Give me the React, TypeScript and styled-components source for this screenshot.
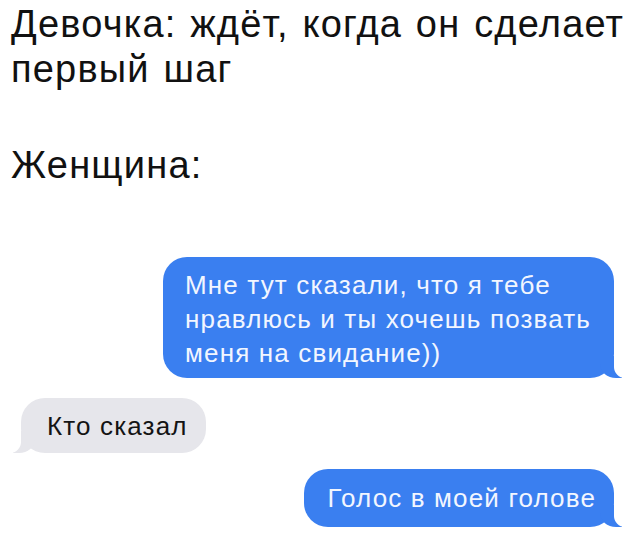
import React from "react";
import styled, { createGlobalStyle } from "styled-components";

const Global = createGlobalStyle`
  html, body { margin: 0; padding: 0; background: #ffffff; }
  body { font-family: "Liberation Sans", Arial, sans-serif; }
`;

const Page = styled.div`
  width: 640px;
  height: 549px;
  overflow: hidden;
  display: flex;
  flex-direction: column;
  background: #ffffff;
`;

const Caption = styled.div`
  padding: 2px 0 0 11px;
  font-size: 38px;
  line-height: 45px;
  color: #111111;
  letter-spacing: 1.2px;
  word-spacing: 2px;
  white-space: nowrap;
`;

const Label = styled(Caption)`
  padding-top: 0;
  margin-top: 51px;
`;

const Chat = styled.div`
  display: flex;
  flex-direction: column;
  padding: 69px 26px 0 21px;
`;

const Row = styled.div<{ $me?: boolean; $top?: number }>`
  display: flex;
  justify-content: ${(p) => (p.$me ? "flex-end" : "flex-start")};
  margin-top: ${(p) => p.$top ?? 0}px;
`;

const Bubble = styled.div<{ $me?: boolean; $pad: string }>`
  position: relative;
  background: ${(p) => (p.$me ? "#3a7ff0" : "#e6e6eb")};
  color: ${(p) => (p.$me ? "#f2f6ff" : "#141414")};
  font-size: 26px;
  line-height: 34px;
  letter-spacing: 1.15px;
  white-space: nowrap;
  border-radius: 24px;
  padding: ${(p) => p.$pad};

  &::before {
    content: "";
    position: absolute;
    bottom: 0;
    height: 22px;
    width: 22px;
    background: ${(p) => (p.$me ? "#3a7ff0" : "#e6e6eb")};
    ${(p) =>
      p.$me
        ? "right: -8px; border-bottom-left-radius: 16px 14px;"
        : "left: -8px; border-bottom-right-radius: 16px 14px;"}
  }
  &::after {
    content: "";
    position: absolute;
    bottom: 0;
    width: 26px;
    height: 22px;
    background: #ffffff;
    ${(p) =>
      p.$me
        ? "right: -26px; border-bottom-left-radius: 11px;"
        : "left: -26px; border-bottom-right-radius: 11px;"}
  }
`;

export default function App() {
  return (
    <Page>
      <Global />
      <Caption>
        Девочка: ждёт, когда он сделает
        <br />
        первый шаг
      </Caption>
      <Label>Женщина:</Label>
      <Chat>
        <Row $me>
          <Bubble $me $pad="11px 23px 8px 22px">
            Мне тут сказали, что я тебе
            <br />
            нравлюсь и ты хочешь позвать
            <br />
            меня на свидание))
          </Bubble>
        </Row>
        <Row $top={20}>
          <Bubble $pad="11px 18px 10px 26px">Кто сказал</Bubble>
        </Row>
        <Row $me $top={16}>
          <Bubble $me $pad="12px 18px 12px 23px">Голос в моей голове</Bubble>
        </Row>
      </Chat>
    </Page>
  );
}
